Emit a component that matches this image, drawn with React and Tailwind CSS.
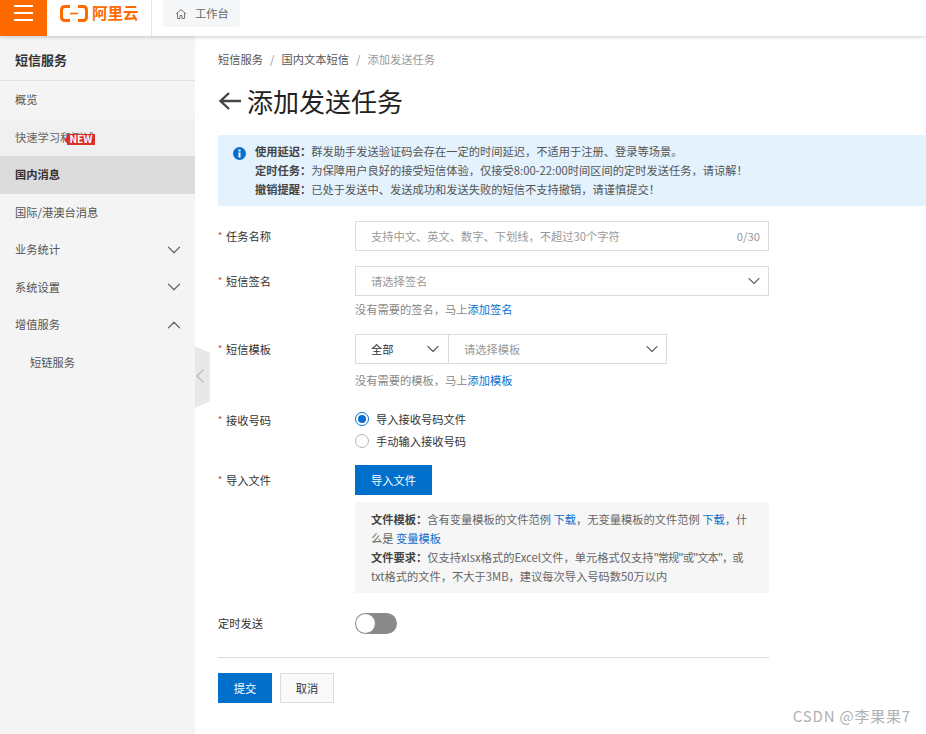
import React from "react";
import { ChevronDown, ChevronUp, ChevronLeft } from "lucide-react";

const font = { fontFamily: '"Noto Sans CJK SC", "Liberation Sans", sans-serif' };

function NavItem({ label, icon, active, hover, sub }) {
  return (
    <div
      className={`flex h-[37.5px] items-center justify-between pr-[10px] text-[11.25px] ${sub ? "pl-[30px]" : "pl-[15px]"} ${
        active ? "bg-[#dcdcdc] font-bold text-[#333]" : hover ? "bg-[#f0f0f0] text-[#666]" : "text-[#555]"
      }`}
    >
      <span>{label}</span>
      {icon === "down" && <ChevronDown size={22} strokeWidth={1.3} className="text-[#666]" />}
      {icon === "up" && <ChevronUp size={22} strokeWidth={1.3} className="text-[#666]" />}
    </div>
  );
}

function Label({ text, required = true }) {
  return (
    <div className="flex h-[20px] w-[137px] shrink-0 items-center text-[11.25px] leading-[20px] text-[#333]">
      {required && <span className="mr-[5px] w-[3px] text-[9px] text-[#d93026]">*</span>}
      {text}
    </div>
  );
}

export default function App() {
  return (
    <div style={font} className="relative h-[734px] w-[926px] overflow-hidden bg-white">
      <header className="relative z-10 flex h-[36px] items-center bg-white shadow-[0_1px_4px_rgba(0,0,0,0.2)]">
        <div className="flex h-[36px] w-[47px] flex-col items-center justify-center gap-[5px] bg-[#ff6a00] pb-[10px]">
          <span className="h-[2px] w-[19px] bg-white" />
          <span className="h-[2px] w-[19px] bg-white" />
          <span className="h-[2px] w-[19px] bg-white" />
        </div>
        <div className="flex h-[36px] w-[105px] items-center border-r border-[#e5e5e5] pb-[10px] pl-[13px]">
          <svg width="28" height="17" viewBox="0 0 28 17" fill="none">
            <path d="M10 1.5H5Q1.5 1.5 1.5 5V12Q1.5 15.5 5 15.5H10" stroke="#ff6a00" strokeWidth="3" />
            <path d="M18 1.5H23Q26.5 1.5 26.5 5V12Q26.5 15.5 23 15.5H18" stroke="#ff6a00" strokeWidth="3" />
            <path d="M10 8.5H18" stroke="#ff6a00" strokeWidth="1.6" />
          </svg>
          <span className="ml-[4px] text-[15.5px] font-bold leading-none text-[#ff6a00]">阿里云</span>
        </div>
        <div className="mb-[9px] ml-[11px] flex h-[27px] w-[77px] items-center rounded-b-[2px] bg-[#f5f6f7] pl-[12px] text-[11.25px] text-[#666]">
          <svg width="12" height="12" viewBox="0 0 12 12" fill="none" stroke="#777" strokeWidth="1">
            <path d="M1 6 6 1.5 11 6M2.5 5.2V10.5H5V7.5H7V10.5H9.5V5.2" />
          </svg>
          <span className="ml-[8px]">工作台</span>
        </div>
      </header>

      <div className="flex h-[698px]">
        <aside className="w-[195px] shrink-0 bg-[#f4f4f4]">
          <div className="flex h-[45px] items-center border-b border-[#e0e0e0] pl-[15px] pt-[4px] text-[13px] font-bold text-[#333]">
            短信服务
          </div>
          <NavItem label="概览" />
          <div className="relative">
            <NavItem label="快速学习和测试" hover />
            <span className="absolute left-[64px] top-[18px] h-0 w-0 border-y-[3px] border-r-[3px] border-y-transparent border-r-[#d9302c]" />
            <span className="absolute left-[67px] top-[15px] flex h-[11px] w-[28px] items-center justify-center bg-[#d9302c] text-[10px] font-bold leading-none text-white">
              NEW
            </span>
          </div>
          <NavItem label="国内消息" active />
          <NavItem label="国际/港澳台消息" />
          <NavItem label="业务统计" icon="down" />
          <NavItem label="系统设置" icon="down" />
          <NavItem label="增值服务" icon="up" />
          <NavItem label="短链服务" sub />
        </aside>

        <main className="relative flex-1 pl-[23px]">
          <div className="absolute left-0 top-[310px]">
            <svg width="15" height="62" viewBox="0 0 15 62">
              <polygon points="0,0 15,7 15,55 0,62" fill="#e8e8e8" />
            </svg>
            <ChevronLeft size={24} strokeWidth={1.2} className="absolute left-[-7px] top-[18px] text-[#bbb]" />
          </div>

          <div className="mt-[14px] flex h-[18px] items-center text-[11.25px] text-[#555]">
            <span>短信服务</span>
            <span className="mx-[7px] text-[#999]">/</span>
            <span>国内文本短信</span>
            <span className="mx-[7px] text-[#999]">/</span>
            <span className="text-[#999]">添加发送任务</span>
          </div>

          <div className="mt-[14px] flex h-[38px] items-center text-[26px] leading-none text-[#222]">
            <svg width="24" height="20" viewBox="0 0 24 20" fill="none" stroke="#444" strokeWidth="2.4">
              <path d="M23 10H3M11 2 2.5 10 11 18" />
            </svg>
            <span className="ml-[5px]">添加发送任务</span>
          </div>

          <div className="mt-[15px] flex h-[71px] items-start bg-[#e3f2fd] pl-[15px] pt-[7px] text-[11.25px] leading-[18.75px] text-[#555]">
            <svg width="13" height="13" viewBox="0 0 13 13" className="mt-[5px] shrink-0">
              <circle cx="6.5" cy="6.5" r="6.5" fill="#0a6fcf" />
              <rect x="5.5" y="2.5" width="2" height="2" fill="#fff" />
              <rect x="5.5" y="5.5" width="2" height="5" fill="#fff" />
            </svg>
            <div className="ml-[9px]">
              <div><b className="text-[#444]">使用延迟：</b>群发助手发送验证码会存在一定的时间延迟，不适用于注册、登录等场景。</div>
              <div><b className="text-[#444]">定时任务：</b>为保障用户良好的接受短信体验，仅接受8:00-22:00时间区间的定时发送任务，请谅解！</div>
              <div><b className="text-[#444]">撤销提醒：</b>已处于发送中、发送成功和发送失败的短信不支持撤销，请谨慎提交！</div>
            </div>
          </div>

          <div className="mt-[15px] flex w-[551px] items-start">
            <div className="pt-[5px]"><Label text="任务名称" /></div>
            <div className="flex h-[30px] w-[414px] items-center justify-between border border-[#dcdcdc] pl-[15px] pr-[8px] text-[11.25px] text-[#999]">
              <span>支持中文、英文、数字、下划线，不超过30个字符</span>
              <span>0/30</span>
            </div>
          </div>

          <div className="mt-[15px] flex w-[551px] items-start">
            <div className="pt-[5px]"><Label text="短信签名" /></div>
            <div className="w-[414px]">
              <div className="flex h-[30px] items-center justify-between border border-[#dcdcdc] pl-[15px] pr-[4px] text-[11.25px] text-[#999]">
                <span>请选择签名</span>
                <ChevronDown size={20} strokeWidth={1.3} className="text-[#666]" />
              </div>
              <div className="mt-[4px] h-[18px] text-[11.25px] leading-[18px] text-[#888]">
                没有需要的签名，马上<span className="text-[#0a6fcf]">添加签名</span>
              </div>
            </div>
          </div>

          <div className="mt-[16px] flex w-[551px] items-start">
            <div className="pt-[5px]"><Label text="短信模板" /></div>
            <div>
              <div className="flex h-[30px] w-[312px] border border-[#dcdcdc] text-[11.25px]">
                <div className="flex w-[93px] items-center justify-between border-r border-[#dcdcdc] pl-[15px] pr-[5px] text-[#333]">
                  <span>全部</span>
                  <ChevronDown size={20} strokeWidth={1.5} className="text-[#666]" />
                </div>
                <div className="flex flex-1 items-center justify-between pl-[15px] pr-[4px] text-[#999]">
                  <span>请选择模板</span>
                  <ChevronDown size={20} strokeWidth={1.3} className="text-[#666]" />
                </div>
              </div>
              <div className="mt-[7px] h-[18px] text-[11.25px] leading-[18px] text-[#888]">
                没有需要的模板，马上<span className="text-[#0a6fcf]">添加模板</span>
              </div>
            </div>
          </div>

          <div className="mt-[19px] flex w-[551px] items-start">
            <div className="pt-[2px]"><Label text="接收号码" /></div>
            <div className="text-[11.25px] text-[#333]">
              <div className="flex h-[22px] items-center">
                <span className="flex h-[14px] w-[14px] items-center justify-center rounded-full border border-[#0a6fcf]">
                  <span className="h-[8px] w-[8px] rounded-full bg-[#0a6fcf]" />
                </span>
                <span className="ml-[7px]">导入接收号码文件</span>
              </div>
              <div className="flex h-[22px] items-center">
                <span className="h-[14px] w-[14px] rounded-full border border-[#b5b5b5]" />
                <span className="ml-[7px]">手动输入接收号码</span>
              </div>
            </div>
          </div>

          <div className="mt-[13px] flex w-[551px] items-start">
            <div className="pt-[5px]"><Label text="导入文件" /></div>
            <div className="w-[414px]">
              <div className="flex h-[30px] w-[77px] items-center justify-center bg-[#0070cc] text-[11.25px] text-white">导入文件</div>
              <div className="mt-[7px] h-[91px] bg-[#f6f6f6] pl-[16px] pr-[4px] pt-[8px] text-[11.25px] leading-[19px] text-[#666]">
                <div>
                  <b className="text-[#444]">文件模板：</b>含有变量模板的文件范例 <span className="text-[#0a6fcf]">下载</span>，无变量模板的文件范例 <span className="text-[#0a6fcf]">下载</span>，什<br />么是 <span className="text-[#0a6fcf]">变量模板</span>
                </div>
                <div>
                  <b className="text-[#444]">文件要求：</b>仅支持xlsx格式的Excel文件，单元格式仅支持<span className="tracking-[-1px]">"常规"或"文本"，</span>或<br />txt格式的文件，不大于3MB，建议每次导入号码数50万以内
                </div>
              </div>
            </div>
          </div>

          <div className="mt-[20px] flex h-[21px] w-[551px] items-center">
            <div className="pb-[2px]"><Label text="定时发送" required={false} /></div>
            <div className="flex h-[21px] w-[42px] items-center rounded-full bg-[#8a8a8a]">
              <span className="h-[19px] w-[19px] translate-x-[1px] rounded-full bg-white" />
            </div>
          </div>

          <div className="mt-[23px] w-[551px] border-t border-[#dcdcdc]" />

          <div className="mt-[15px] flex gap-[8px] text-[11.25px]">
            <div className="flex h-[30px] w-[54px] items-center justify-center bg-[#0070cc] text-white">提交</div>
            <div className="flex h-[30px] w-[54px] items-center justify-center border border-[#dcdcdc] bg-[#f9f9f9] text-[#333]">取消</div>
          </div>

          <div className="absolute bottom-[7px] right-[15px] text-[15px] tracking-[0.8px] text-[#b0b0b0]">CSDN @李果果7</div>
        </main>
      </div>
    </div>
  );
}
